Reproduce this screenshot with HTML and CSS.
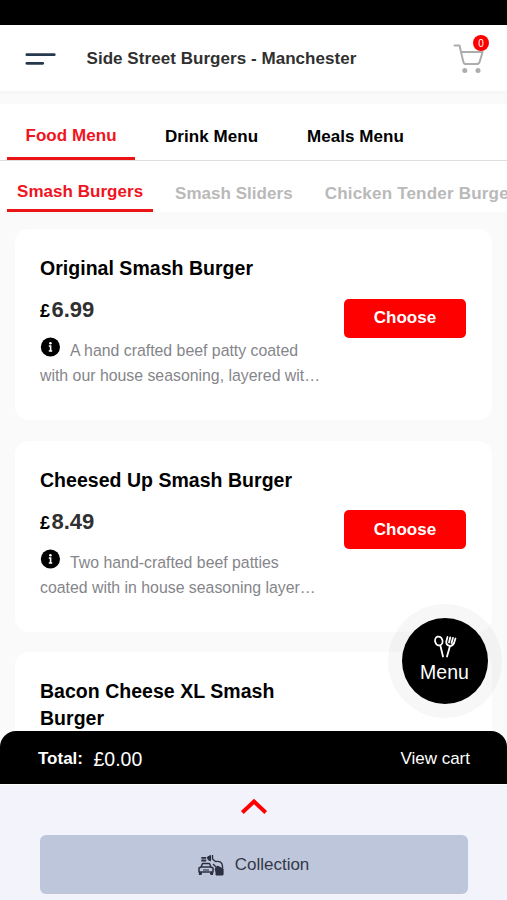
FILE: index.html
```html
<!DOCTYPE html>
<html lang="en">
<head>
<meta charset="utf-8">
<title>Side Street Burgers - Manchester</title>
<link rel="stylesheet" href="styles.css">
</head>
<body>
<div class="app">
  <div class="status-bar"></div>
  <header class="header">
    <svg class="burger" width="32" height="14" viewBox="0 0 32 14"><path d="M2.800 2.700H30.300M2.800 11.300H18.800" stroke="#26384e" stroke-width="2.700" stroke-linecap="round"/></svg>
    <h1 class="store">Side Street Burgers - Manchester</h1>
    <div class="cart">
      <svg width="32" height="32" viewBox="0 0 32 32" fill="none" stroke="#adadad" stroke-width="2" stroke-linecap="round" stroke-linejoin="round"><path d="M1.500 2.600H6.500L10.300 18.700Q10.800 21 13 21H23.800Q26 21 26.600 18.900L29.600 9H8"/><circle cx="11.800" cy="27.500" r="2.500" fill="#adadad" stroke="none"/><circle cx="25" cy="27.500" r="2.500" fill="#adadad" stroke="none"/></svg>
      <span class="badge">0</span>
    </div>
  </header>
  <nav class="tabs">
    <a class="tab tab-active">Food Menu</a>
    <a class="tab">Drink Menu</a>
    <a class="tab">Meals Menu</a>
  </nav>
  <nav class="subtabs">
    <a class="subtab subtab-active">Smash Burgers</a>
    <a class="subtab">Smash Sliders</a>
    <a class="subtab subtab-wide">Chicken Tender Burgers</a>
  </nav>
  <main class="list">
    <article class="card">
      <div class="info">
        <h2 class="name">Original Smash Burger</h2>
        <div class="price"><span class="pound">£</span>6.99</div>
        <p class="desc"><svg class="i" width="20" height="20" viewBox="0 0 20 20"><circle cx="10.400" cy="10" r="9.600"/><circle cx="10.400" cy="6.200" r="1.300" fill="#fff"/><path d="M8.800 9H10.600V14M8.800 14H12.200" stroke="#fff" stroke-width="1.600" fill="none"/></svg>A hand crafted beef patty coated<br>with our house seasoning, layered wit…</p>
      </div>
      <button class="choose">Choose</button>
    </article>
    <article class="card">
      <div class="info">
        <h2 class="name">Cheesed Up Smash Burger</h2>
        <div class="price"><span class="pound">£</span>8.49</div>
        <p class="desc"><svg class="i" width="20" height="20" viewBox="0 0 20 20"><circle cx="10.400" cy="10" r="9.600"/><circle cx="10.400" cy="6.200" r="1.300" fill="#fff"/><path d="M8.800 9H10.600V14M8.800 14H12.200" stroke="#fff" stroke-width="1.600" fill="none"/></svg>Two hand-crafted beef patties<br>coated with in house seasoning layer…</p>
      </div>
      <button class="choose">Choose</button>
    </article>
    <article class="card">
      <div class="info">
        <h2 class="name">Bacon Cheese XL Smash Burger</h2>
      </div>
    </article>
  </main>
  <div class="fab">
    <svg width="24" height="24" viewBox="0 0 24 24" fill="none" stroke="#fff" stroke-width="1.800" stroke-linecap="round" stroke-linejoin="round"><ellipse cx="5.800" cy="6" rx="3.700" ry="4.500" transform="rotate(-14 5.800 6)"/><path d="M7.400 10.800L10 21.500M14 21.500L17 11M14.500 2L13.300 6.500Q13 10 16.500 10.800Q19.500 11.200 21 8L22.500 3.500M17.300 2.300L16 7.500M20 2.800L18.500 8"/></svg>
    <span>Menu</span>
  </div>
  <footer class="footer">
    <div class="total-bar">
      <span class="total">Total:</span>
      <span class="amount">£0.00</span>
      <span class="view">View cart</span>
    </div>
    <div class="panel">
      <svg class="chevron" width="28" height="18" viewBox="0 0 28 18"><path d="M2.300 15.500L14 4.500L25.700 15.500" stroke="#f00" stroke-width="3.900" fill="none"/></svg>
      <button class="collection">
        <svg width="26" height="22" viewBox="0 0 26 22" fill="none" stroke="#2b3040" stroke-width="1.500" stroke-linejoin="round"><path d="M1 14L3 13L4.500 9.500H11.500L13 13L15 14V18H1ZM3 13H13"/><path d="M2 18V21M14 18V21M1.500 19.500H4M12 19.500H14.500" stroke-width="2.200"/><path d="M5 16H11" stroke-width="1.100"/><path d="M3.300 3.800H8.200M3.300 6.500H8.200" stroke-width="1.800"/><path d="M9.500 3L12.500 1.500V7L10 5.500Z" fill="#2b3040" stroke-width="1"/><path d="M14.500 1V5L17.500 7.500Q24 6.500 24.500 12V20M15 10L19 14" stroke-width="1.400"/><path d="M17 15L19.500 12L25 15V21H18V18Z" fill="#2b3040" stroke-width="1"/></svg>
        <span>Collection</span>
      </button>
    </div>
  </footer>
</div>
</body>
</html>
```
FILE: styles.css
```css
* { box-sizing: border-box; }
body {
  margin: 0;
  background: #fafafa;
  font-family: "Liberation Sans", Arial, sans-serif;
  color: #000;
}
h1, h2, p { margin: 0; }
button { border: 0; padding: 0; font-family: inherit; }
.app {
  position: relative;
  display: flex;
  flex-direction: column;
  width: 507px;
  height: 900px;
  overflow: hidden;
}
.status-bar { flex: none; height: 25px; background: #000; }
.header {
  flex: none;
  display: flex;
  align-items: center;
  height: 66px;
  margin-bottom: 13px;
  padding: 1px 22px 0 24px;
  background: #fff;
  box-shadow: 0 1px 4px rgba(0, 0, 0, .04);
}
.burger { flex: none; }
.store {
  margin-left: 30.500px;
  padding-top: 1px;
  color: #303030;
  font-size: 17px;
  letter-spacing: .05px;
  line-height: 24px;
  white-space: nowrap;
}
.cart { position: relative; width: 32px; height: 32px; margin-left: auto; }
.cart svg { display: block; }
.badge {
  position: absolute;
  top: -8px;
  right: -4px;
  width: 16px;
  height: 16px;
  border-radius: 50%;
  background: #f00;
  color: #fff;
  font-size: 10px;
  line-height: 17px;
  text-align: center;
}
.tabs, .subtabs {
  flex: none;
  display: flex;
  background: #fff;
  font-size: 17px;
  font-weight: bold;
  white-space: nowrap;
}
.tabs {
  height: 57px;
  padding-left: 7px;
  gap: 11px;
  border-bottom: 1px solid #dedede;
}
.tab { padding: 23px 19px 0; letter-spacing: .05px; line-height: 20px; }
.tab-active {
  width: 128px;
  height: 56px;
  padding: 22px 0 0 18.500px;
  border-bottom: 3px solid #ec1515;
  color: #f0141e;
}
.subtabs { height: 51px; padding-left: 7px; gap: 12px; }
.subtab { padding: 23px 10px 0; color: #b9b9b9; letter-spacing: .04px; line-height: 20px; }
.subtab-active {
  width: 146px;
  padding-top: 21px;
  border-bottom: 3px solid #ec1515;
  color: #f0141e;
}
.subtab-wide { letter-spacing: .2px; }
.list {
  flex: 1;
  min-height: 0;
  display: flex;
  flex-direction: column;
  gap: 20.500px;
  padding: 17px 15px 0;
  overflow: hidden;
}
.card {
  flex: none;
  display: flex;
  justify-content: space-between;
  height: 191px;
  padding: 25px 26px 0 25px;
  border-radius: 14px;
  background: #fff;
}
.info { width: 290px; }
.name { width: 270px; padding-top: 1px; font-size: 19.500px; letter-spacing: .03px; line-height: 27px; }
.price {
  margin-top: 14px;
  color: #303030;
  font-size: 22px;
  font-weight: bold;
  line-height: 28px;
}
.pound { margin-right: 1.500px; color: #000; font-size: 18px; }
.desc {
  margin-top: 12px;
  color: #85858a;
  font-size: 15.850px;
  line-height: 25px;
  white-space: nowrap;
}
.i { margin: 0 10px 0 0; vertical-align: -1px; }
.choose {
  width: 122px;
  height: 39px;
  margin-top: 44.500px;
  border-radius: 5px;
  background: #f00;
  color: #fff;
  font-size: 17px;
  font-weight: bold;
}
.fab {
  position: absolute;
  left: 401.500px;
  top: 617.500px;
  display: flex;
  flex-direction: column;
  align-items: center;
  width: 86px;
  height: 86px;
  padding-top: 17px;
  border-radius: 50%;
  background: #000;
  box-shadow: 0 0 0 14px rgba(0, 0, 0, .03);
  color: #fff;
  font-size: 19.500px;
  line-height: 26px;
}
.fab svg { flex: none; }
.footer { position: relative; flex: none; height: 169px; margin-top: -20px; }
.total-bar {
  display: flex;
  align-items: center;
  height: 53px;
  padding: 3px 37px 0 38px;
  border-radius: 16px 16px 0 0;
  background: #000;
  color: #fff;
}
.total { font-size: 17px; font-weight: bold; }
.amount { margin-left: 10.500px; font-size: 19.500px; }
.view { margin-left: auto; font-size: 17px; }
.panel {
  display: flex;
  flex-direction: column;
  align-items: center;
  height: 116px;
  padding-top: 12px;
  border-top: 1px solid #fff;
  background: #f2f3fb;
}
.chevron { flex: none; }
.collection {
  display: flex;
  align-items: center;
  justify-content: center;
  gap: 11px;
  flex: none;
  width: 428px;
  height: 59px;
  margin-top: 20px;
  padding-top: 1px;
  border-radius: 6px;
  background: #bec6dc;
  color: #343845;
  font-size: 17px;
}
```
